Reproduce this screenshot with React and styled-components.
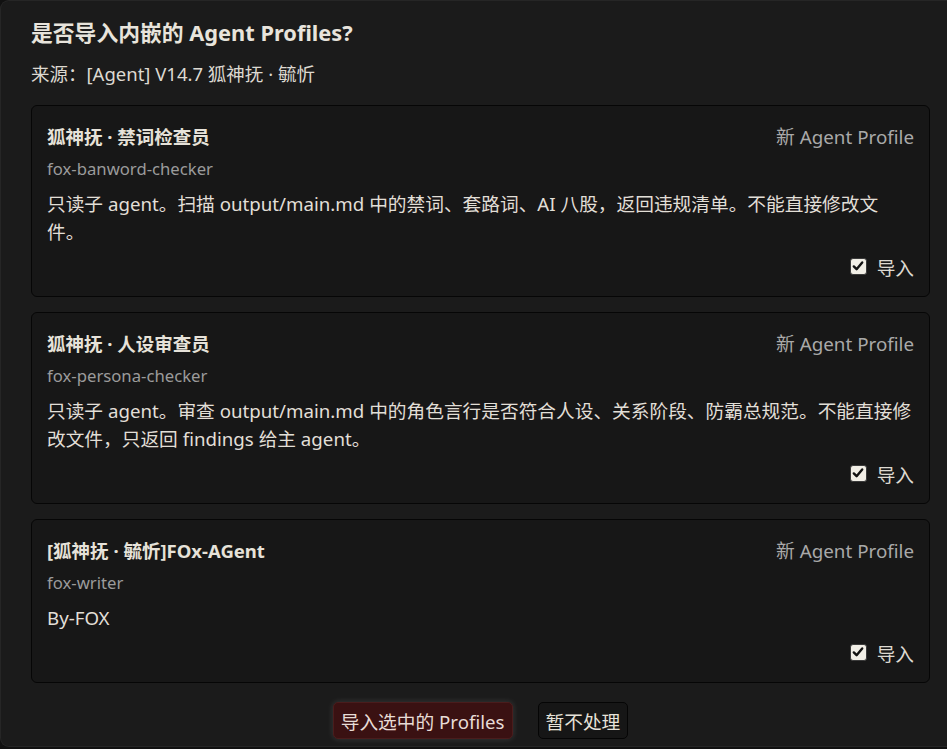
import React from 'react';
import styled, { createGlobalStyle } from 'styled-components';

const GlobalStyle = createGlobalStyle`
  html, body {
    margin: 0;
    padding: 0;
    background: #111111;
    overflow: hidden;
  }
  body {
    font-family: 'Noto Sans', 'Noto Sans CJK SC', sans-serif;
    color: #e4e0d8;
  }
`;

const Dialog = styled.div`
  box-sizing: border-box;
  width: 947px;
  height: 747px;
  padding: 18px 17px 8px 30px;
  background: #1b1b1b;
  border: 1px solid #262626;
  border-right: none;
  border-radius: 9px 0 0 9px;
  display: flex;
  flex-direction: column;
`;

const Heading = styled.h2`
  margin: 0;
  font-size: 21.8px;
  line-height: 28px;
  font-weight: 700;
  color: #e8e4dc;
`;

const Source = styled.div`
  margin-top: 14px;
  font-size: 18.5px;
  line-height: 26px;
  color: #ddd9d1;
`;

const List = styled.div`
  margin-top: 18px;
  display: flex;
  flex-direction: column;
  gap: 15px;
`;

const Card = styled.div`
  border: 1px solid #060606;
  border-radius: 6px;
  background: #171717;
  padding: 15px 15px 17px 15px;
`;

const CardHead = styled.div`
  display: flex;
  justify-content: space-between;
  align-items: center;
  height: 30px;
`;

const CardTitle = styled.div`
  font-size: 18.5px;
  font-weight: 700;
  color: #e6e2d9;
`;

const Kind = styled.div`
  font-size: 18.8px;
  color: #a9a9a9;
`;

const Slug = styled.div`
  margin-top: 5px;
  font-size: 16.7px;
  line-height: 26px;
  color: #9b9b9b;
`;

const Desc = styled.div`
  margin-top: 8px;
  font-size: 18.7px;
  line-height: 28px;
  color: #e2dfd7;
`;

const Footer = styled.label`
  margin-top: 7px;
  height: 26px;
  display: flex;
  justify-content: flex-end;
  align-items: center;
  gap: 10px;
  font-size: 18.7px;
  color: #ddd9d1;
`;

const Box = styled.span`
  box-sizing: border-box;
  width: 17px;
  height: 17px;
  border-radius: 3px;
  border: 1px solid #3a3a3a;
  background: #f1eee6;
  display: flex;
  align-items: center;
  justify-content: center;
`;

const Actions = styled.div`
  margin-top: 19px;
  display: flex;
  justify-content: center;
  gap: 25px;
`;

const Button = styled.button`
  height: 37px;
  padding: 0 7px;
  font-family: inherit;
  font-size: 18.7px;
  border-radius: 5px;
  color: ${p => (p.primary ? '#e8dcd6' : '#e6e2d9')};
  background: ${p => (p.primary ? '#3a1112' : '#161616')};
  border: 1px solid ${p => (p.primary ? '#4a1c1c' : '#050505')};
  box-shadow: ${p => (p.primary ? '0 0 6px rgba(255, 255, 255, 0.14)' : 'none')};
`;

const profiles = [
  {
    title: '狐神抚 · 禁词检查员',
    slug: 'fox-banword-checker',
    desc: '只读子 agent。扫描 output/main.md 中的禁词、套路词、AI 八股，返回违规清单。不能直接修改文件。',
  },
  {
    title: '狐神抚 · 人设审查员',
    slug: 'fox-persona-checker',
    desc: '只读子 agent。审查 output/main.md 中的角色言行是否符合人设、关系阶段、防霸总规范。不能直接修改文件，只返回 findings 给主 agent。',
  },
  {
    title: '[狐神抚 · 毓忻]FOx-AGent',
    slug: 'fox-writer',
    desc: 'By-FOX',
  },
];

function Check() {
  return (
    <Box>
      <svg width="12" height="12" viewBox="0 0 12 12">
        <path d="M1.8 6.4 L4.6 9.2 L10.2 2.4" fill="none" stroke="#111" strokeWidth="2.4" strokeLinecap="round" strokeLinejoin="round" />
      </svg>
    </Box>
  );
}

export default function App() {
  return (
    <>
      <GlobalStyle />
      <Dialog>
        <Heading>是否导入内嵌的 Agent Profiles?</Heading>
        <Source>来源：[Agent] V14.7 狐神抚 · 毓忻</Source>
        <List>
          {profiles.map(p => (
            <Card key={p.slug}>
              <CardHead>
                <CardTitle>{p.title}</CardTitle>
                <Kind>新 Agent Profile</Kind>
              </CardHead>
              <Slug>{p.slug}</Slug>
              <Desc>{p.desc}</Desc>
              <Footer>
                <Check />
                导入
              </Footer>
            </Card>
          ))}
        </List>
        <Actions>
          <Button primary>导入选中的 Profiles</Button>
          <Button>暂不处理</Button>
        </Actions>
      </Dialog>
    </>
  );
}
